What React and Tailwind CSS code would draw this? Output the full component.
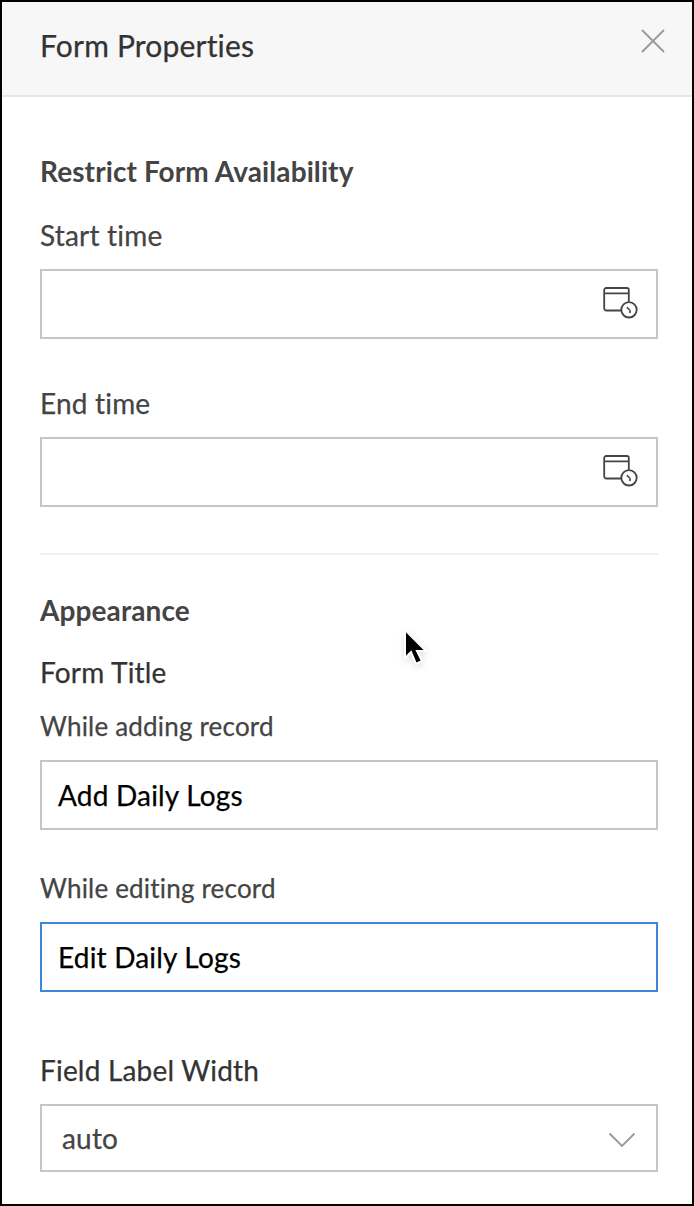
function CalendarClockIcon() {
  return (
    <svg width="36" height="34" viewBox="0 0 36 34" fill="none" stroke="#444" strokeWidth="1.8">
      <path d="M19 23.500H4.200a2 2 0 0 1-2-2V3a2 2 0 0 1 2-2h20.600a2 2 0 0 1 2 2V14.800M2.200 6.300h24.600" />
      <circle cx="27" cy="22.800" r="7.700" />
      <path d="M24.800 20.300l2.700 2.300M28 22.700v3.400" strokeWidth="1.600" />
    </svg>
  );
}

function DateField({ label, className }) {
  return (
    <div className={className}>
      <label className="block text-[28px] leading-[34px] text-[#444]">{label}</label>
      <div className="mt-[17px] flex h-[70px] items-center justify-end border-2 border-[#c5c4cb] pr-[18px]">
        <CalendarClockIcon />
      </div>
    </div>
  );
}

function TextField({ label, value, focused, className }) {
  return (
    <div className={className}>
      <label className="block text-[26px] leading-8 text-[#444]">{label}</label>
      <div className={`mt-[18px] flex h-[70px] items-center border-2 px-4 text-[28px] text-black ${focused ? 'border-[#3d87d9]' : 'border-[#c5c4cb]'}`}>
        {value}
      </div>
    </div>
  );
}

export default function App() {
  return (
    <div className="relative h-[1206px] w-[694px] overflow-hidden border-2 border-black bg-white font-['Lato',sans-serif] tracking-[0.19px] text-[#333] [-webkit-text-stroke:0.25px]">
      <header className="flex h-[95px] justify-between border-b-2 border-[#e6e6e6] bg-[#f7f7f7] pl-[38px] pr-[27px]">
        <h1 className="mt-[25px] text-[30px] leading-9">Form Properties</h1>
        <svg className="mt-[27px]" width="24" height="24" viewBox="0 0 24 24" stroke="#999" strokeWidth="1.800">
          <path d="M1 1l22 22M23 1L1 23" />
        </svg>
      </header>
      <main className="pl-[38px] pr-[34px]">
        <section className="border-b-2 border-[#f0f0f0] pb-[46px] pt-[57px]">
          <h2 className="text-[28px] font-bold leading-[34px] tracking-[0.1px] text-[#444] [-webkit-text-stroke:0px]">Restrict Form Availability</h2>
          <DateField label="Start time" className="mt-[30px]" />
          <DateField label="End time" className="mt-[47px]" />
        </section>
        <section className="pt-[38px]">
          <h2 className="text-[28px] font-bold leading-[34px] tracking-[0.1px] text-[#444] [-webkit-text-stroke:0px]">Appearance</h2>
          <h3 className="mt-7 text-[28px] leading-[34px]">Form Title</h3>
          <TextField label="While adding record" value="Add Daily Logs" className="mt-[21px]" />
          <TextField label="While editing record" value="Edit Daily Logs" focused className="mt-[42px]" />
          <label className="mt-[61px] block text-[28px] leading-[34px]">Field Label Width</label>
          <div className="mt-[17px] flex h-[68px] items-center justify-between border-2 border-[#c5c4cb] px-5 text-[28px] text-[#444]">
            auto
            <svg className="mt-[3px]" width="28" height="16" viewBox="0 0 28 16" fill="none" stroke="#999" strokeWidth="1.800">
              <path d="M1.500 1.500l12.500 12.500L26.500 1.500" />
            </svg>
          </div>
        </section>
      </main>
      {/* Mouse pointer */}
      <svg className="absolute left-[401px] top-[627px] drop-shadow-md" width="26" height="38" viewBox="0 0 26 38">
        <path d="M2 1v28l6-6 5 12 6-3-5-10h9z" fill="#000" stroke="#fff" strokeWidth="2" />
      </svg>
    </div>
  );
}
